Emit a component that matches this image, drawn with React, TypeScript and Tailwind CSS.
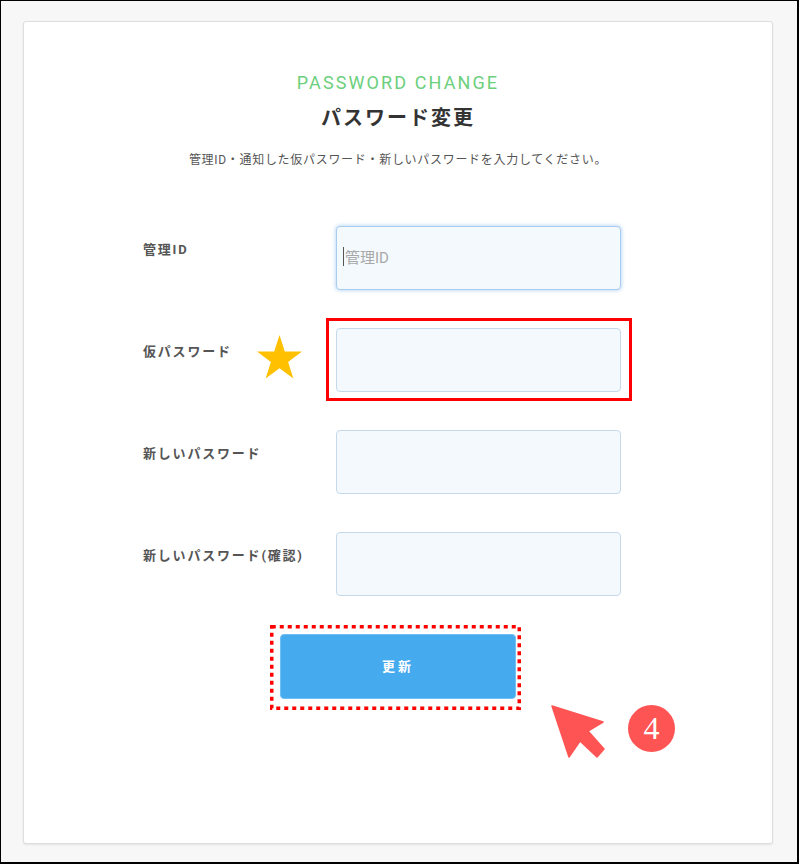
import React from 'react';

const rows = [
  { label: '管理ID', placeholder: '管理ID', focused: true },
  { label: '仮パスワード', placeholder: '', marked: true },
  { label: '新しいパスワード', placeholder: '' },
  { label: '新しいパスワード(確認)', placeholder: '' },
];

export default function App() {
  return (
    <div className="w-[799px] h-[864px] box-border bg-[#f7f7f7] border-l border-t border-r-2 border-b-2 border-black pt-[20px] pl-[22px] font-['Roboto','Noto_Sans_CJK_JP',sans-serif]">
      <div className="w-[750px] h-[823px] box-border bg-white border border-[#dedede] rounded-[3px] shadow-[0_1px_2px_rgba(0,0,0,0.08)] pt-[51px]">
        {/* Heading */}
        <p className="text-center text-[18px] leading-[20px] tracking-[2.1px] text-[#6ccf7c]">PASSWORD CHANGE</p>
        <h1 className="mt-[11px] text-center text-[20px] leading-[28px] font-bold tracking-[2px] text-[#333]">パスワード変更</h1>
        <p className="mt-[19px] text-center text-[12px] leading-[18px] tracking-[0.7px] text-[#555]">
          管理ID・通知した仮パスワード・新しいパスワードを入力してください。
        </p>

        {/* Form rows */}
        <div className="mt-[57px] ml-[119px] flex flex-col gap-[38px]">
          {rows.map((row) => (
            <div key={row.label} className="relative flex">
              <label className="w-[193px] pt-[16px] text-[13px] leading-[16px] font-bold tracking-[1.8px] text-[#555]">
                {row.label}
              </label>
              <div className="relative">
                <input
                  type="text"
                  placeholder={row.placeholder}
                  className={`block w-[285px] h-[64px] box-border rounded-[4px] bg-[#f4f9fe] px-[8px] text-[15px] text-[#333] placeholder:text-[#a8a8a8] outline-none border ${
                    row.focused
                      ? 'border-[#a9cdee] shadow-[0_0_4px_rgba(90,160,230,0.55)]'
                      : 'border-[#c6d9ea]'
                  }`}
                />
                {row.focused && <span className="absolute left-[7px] top-[21px] w-[1px] h-[19px] bg-[#555]" />}
                {row.marked && (
                  <div className="absolute -left-[10px] -top-[10px] -right-[11px] -bottom-[9px] border-[3px] border-[#ff0000]" />
                )}
              </div>
              {row.marked && (
                <svg className="absolute left-[114px] top-[7px] w-[45px] h-[44px]" viewBox="0 0 45 44">
                  <polygon
                    points="22.5,0 27.8,16.6 45,16.6 31.1,26.9 36.4,43.5 22.5,33.2 8.6,43.5 13.9,26.9 0,16.6 17.2,16.6"
                    fill="#ffc000"
                  />
                </svg>
              )}
            </div>
          ))}
        </div>

        {/* Submit */}
        <div className="mt-[38px] flex justify-center">
          <div className="relative w-[236px]">
            <button className="block w-full h-[65px] rounded-[4px] bg-[#46aaef] border border-[#6fbef4] text-white text-[13px] font-bold tracking-[3px]">
              更新
            </button>
            <svg className="absolute -left-[10px] -top-[9px] w-[251px] h-[85px]" viewBox="0 0 251 85">
              <rect x="1.75" y="1.75" width="247.5" height="81.5" fill="none" stroke="#ff0000" strokeWidth="3.5" strokeDasharray="4 4" />
            </svg>
            <svg className="absolute left-[270px] top-[70px] w-[56px] h-[56px]" viewBox="0 0 56 56">
              <polygon
                points="2,2 53,18 38,27 54,45 47,53 30,37 19,53"
                fill="#fe5454"
                stroke="#fe5454"
                strokeWidth="1.5"
                strokeLinejoin="round"
              />
            </svg>
            <svg className="absolute left-[348px] top-[71px] w-[47px] h-[47px]" viewBox="0 0 47 47">
              <circle cx="23.5" cy="23.5" r="23.5" fill="#fe5454" />
              <text
                x="23.5"
                y="34"
                textAnchor="middle"
                fontFamily="'Liberation Serif', 'DejaVu Serif', serif"
                fontSize="32"
                fill="#fff"
              >
                4
              </text>
            </svg>
          </div>
        </div>
      </div>
    </div>
  );
}
